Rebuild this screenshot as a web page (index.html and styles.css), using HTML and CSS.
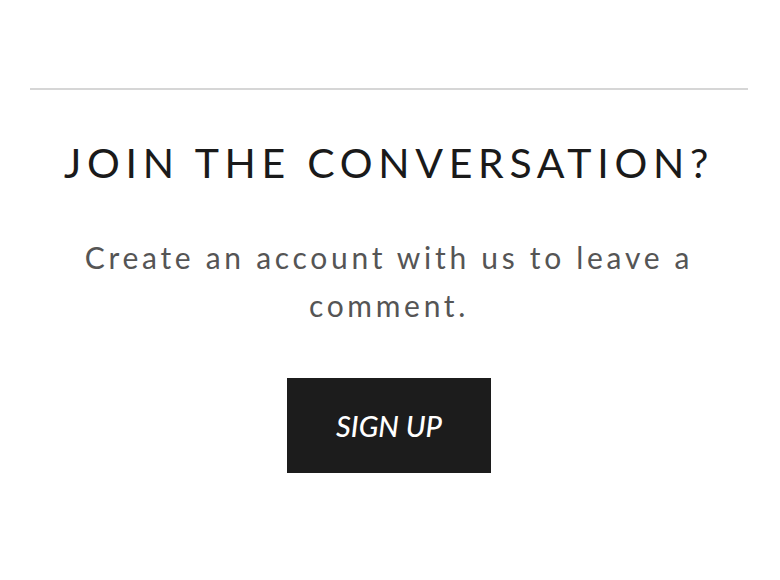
FILE: index.html
```html
<!DOCTYPE html>
<html lang="en">
<head>
<meta charset="utf-8">
<title>Join the conversation</title>
<link rel="stylesheet" href="styles.css">
</head>
<body>
<main class="page">
  <hr class="divider">
  <section class="join">
    <h2 class="join-title">JOIN THE CONVERSATION?</h2>
    <p class="join-text">Create an account with us to leave a comment.</p>
    <a class="join-button" href="#">SIGN UP</a>
  </section>
</main>
</body>
</html>
```
FILE: styles.css
```css
html, body {
  margin: 0;
  padding: 0;
  background: #ffffff;
}
.page {
  padding: 88px 32px 0 30px;
  font-family: "Lato", "Liberation Sans", sans-serif;
}
.divider {
  border: 0;
  height: 2px;
  background: #d6d6d6;
  margin: 0;
}
.join {
  display: flex;
  flex-direction: column;
  align-items: center;
  text-align: center;
}
.join-title {
  margin: 49px 0 0;
  font-size: 41px;
  line-height: 48px;
  font-weight: 400;
  letter-spacing: 5.7px;
  color: #1a1a1a;
}
.join-text {
  margin: 46px 0 0;
  width: 660px;
  font-size: 30px;
  line-height: 48px;
  font-weight: 400;
  letter-spacing: 3.7px;
  color: #555555;
}
.join-button {
  margin-top: 49px;
  width: 204px;
  height: 95px;
  display: flex;
  align-items: center;
  justify-content: center;
  background: #1c1c1c;
  color: #ffffff;
  font-size: 29px;
  font-style: italic;
  font-weight: 500;
  letter-spacing: 0;
  text-decoration: none;
}
```
